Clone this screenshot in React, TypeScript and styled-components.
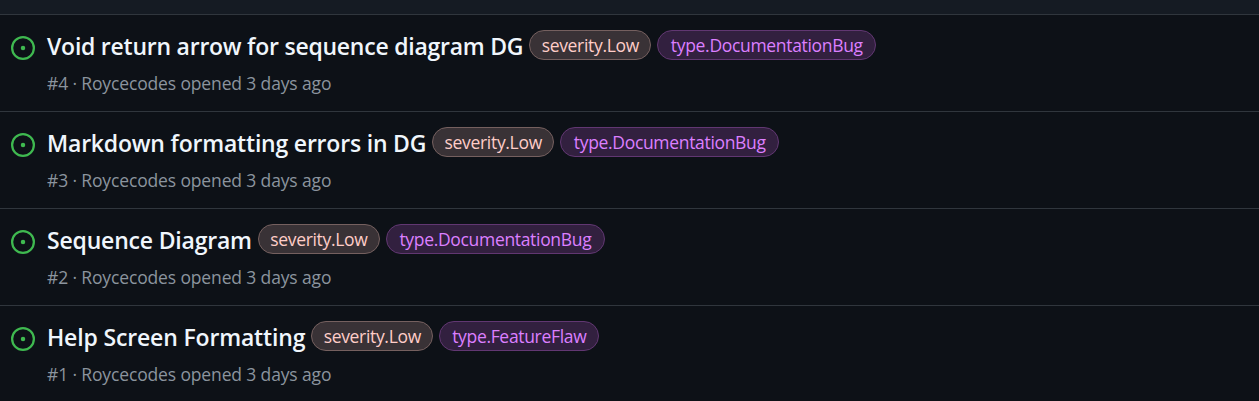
import React from "react";
import styled, { createGlobalStyle } from "styled-components";

const GlobalStyle = createGlobalStyle`
  * { box-sizing: border-box; }
  body {
    margin: 0;
    background: #0d1117;
    font-family: "Segoe UI", "Open Sans", "Noto Sans", sans-serif;
    overflow: hidden;
  }
`;

const List = styled.main`
  height: 401px;
  overflow: hidden;
  background: #0d1117;
`;

const ListHeader = styled.header`
  height: 14px;
  background: #151b23;
`;

const Row = styled.article`
  display: flex;
  height: 97px;
  padding: 15px 11px 0;
  gap: 12px;
  border-top: 1px solid #30363d;
`;

const OpenIcon = styled.svg`
  flex: none;
  width: 24px;
  height: 24px;
  margin-top: 6px;
  color: #3fb950;
`;

const Heading = styled.div`
  display: flex;
  align-items: center;
  gap: 6px;
  height: 30px;
`;

const Title = styled.h3<{ $tracking: number }>`
  margin: 0;
  padding-top: 1px;
  font-size: 23px;
  line-height: 30px;
  font-weight: 600;
  letter-spacing: ${(p) => p.$tracking}px;
  white-space: nowrap;
  color: #f0f6fc;
`;

const tones = {
  low: { width: 122, text: "#ffcdc8", fill: "#393236", line: "#75605f" },
  doc: { width: 219, text: "#dc7fff", fill: "#32203f", line: "#613772" },
  flaw: { width: 160, text: "#dc7fff", fill: "#32203f", line: "#613772" },
};
type Tone = keyof typeof tones;

const Label = styled.span<{ $tone: Tone }>`
  display: flex;
  flex: none;
  justify-content: center;
  width: ${(p) => tones[p.$tone].width}px;
  height: 30px;
  border: 1px solid ${(p) => tones[p.$tone].line};
  border-radius: 15px;
  background: ${(p) => tones[p.$tone].fill};
  color: ${(p) => tones[p.$tone].text};
  font-size: 17.5px;
  line-height: 29px;
  letter-spacing: -0.32px;
  white-space: nowrap;
`;

const Meta = styled.p`
  margin: 10px 0 0;
  font-size: 17.5px;
  line-height: 26px;
  letter-spacing: -0.14px;
  color: #8b949e;
`;

const issues: { id: number; title: string; tracking: number; labels: [Tone, string][] }[] = [
  { id: 4, title: "Void return arrow for sequence diagram DG", tracking: -0.24, labels: [["low", "severity.Low"], ["doc", "type.DocumentationBug"]] },
  { id: 3, title: "Markdown formatting errors in DG", tracking: -0.2, labels: [["low", "severity.Low"], ["doc", "type.DocumentationBug"]] },
  { id: 2, title: "Sequence Diagram", tracking: -0.19, labels: [["low", "severity.Low"], ["doc", "type.DocumentationBug"]] },
  { id: 1, title: "Help Screen Formatting", tracking: -0.16, labels: [["low", "severity.Low"], ["flaw", "type.FeatureFlaw"]] },
];

export default function App() {
  return (
    <>
      <GlobalStyle />
      <List>
        <ListHeader />
        {issues.map((issue) => (
          <Row key={issue.id}>
            <OpenIcon viewBox="0 0 16 16" aria-hidden="true">
              <circle cx="8" cy="8" r="7.25" fill="none" stroke="currentColor" strokeWidth="1.5" />
              <circle cx="8" cy="8" r="1.5" fill="currentColor" />
            </OpenIcon>
            <div>
              <Heading>
                <Title $tracking={issue.tracking}>{issue.title}</Title>
                {issue.labels.map(([tone, text]) => (
                  <Label key={text} $tone={tone}>{text}</Label>
                ))}
              </Heading>
              <Meta>#{issue.id} · Roycecodes opened 3 days ago</Meta>
            </div>
          </Row>
        ))}
      </List>
    </>
  );
}
